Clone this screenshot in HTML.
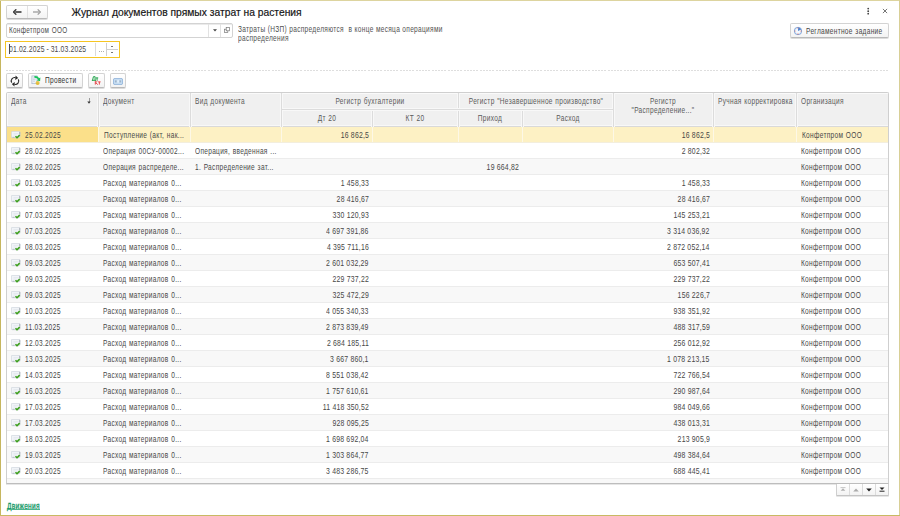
<!DOCTYPE html>
<html><head><meta charset="utf-8"><style>
*{box-sizing:border-box;margin:0;padding:0}
html,body{width:900px;height:516px;overflow:hidden;background:#fff}
body{position:relative;font-family:"Liberation Sans",sans-serif;color:#404040;font-size:8.5px}
.s{display:inline-block;transform:scaleX(.77);transform-origin:0 50%;letter-spacing:.4px;word-spacing:.6px}
.r .s{transform-origin:100% 50%;transform:scaleX(.81);letter-spacing:.25px;word-spacing:0}
.c .s{position:absolute;left:50%;top:0;transform:translateX(-50%) scaleX(.77);transform-origin:50% 50%;white-space:nowrap}
.a{position:absolute}
.bl{position:absolute;left:0;top:0;width:1px;height:516px;background:#c6b65f}
.bt{position:absolute;left:0;top:0;width:900px;height:1px;background:#ddd49f}
.br{position:absolute;left:899px;top:0;width:1px;height:516px;background:#d8cf96}
.bb{position:absolute;left:0;top:515px;width:900px;height:1px;background:#c8b963}
.btn{position:absolute;border:1px solid #d3d3d3;border-bottom-color:#b9b9b9;border-radius:2px;background:linear-gradient(#ffffff,#f3f3f3);box-shadow:0 1px 0 #dcdcdc}
.title{position:absolute;left:71.5px;top:5.5px;font-size:10.3px;line-height:14px;color:#151515;white-space:nowrap;-webkit-text-stroke:0.18px #151515}
.field{position:absolute;border:1px solid #d3d3d3;border-radius:2px;background:#fff;box-shadow:inset 0 1px 0 #ebebeb}
.txt{position:absolute;white-space:nowrap;line-height:9px}
.tbl{position:absolute;left:6px;top:92px;width:883px;height:392px;border:1px solid #cfcfcf;border-bottom:1px solid #bdbdbd;box-shadow:0 1px 0 #e6e6e6;border-radius:2px 2px 0 0}
.hdr{position:absolute;left:7px;top:93px;width:881px;height:34px;background:#f0f0f0;border-bottom:1px solid #d9d9d9;box-shadow:inset 1px 1px 0 #fafafa,inset 0 -1px 0 #f8f8f8;border-radius:1px 1px 0 0}
.vl{position:absolute;width:1px;background:#dcdcdc;box-shadow:1px 0 0 #f8f8f8,-1px 0 0 #f8f8f8}
.hl{position:absolute;height:1px;background:#dcdcdc;box-shadow:0 1px 0 #f8f8f8,0 -1px 0 #f8f8f8}
.ht{position:absolute;white-space:nowrap;line-height:10px;color:#5a5a5a}
.row{position:absolute;left:7px;width:881px;height:16px;background:#fff;border-bottom:1px solid #ececec}
.row.alt{background:#f8f8f8}
.row.sel{background:#fdf1c4;border-bottom-color:#f3eedd}
.cell{position:absolute;top:0;height:15px;line-height:16px;white-space:nowrap;overflow:hidden;color:#474747}
.row .cell{}
.cell.l{padding-left:5px}
.cell.r{text-align:right;padding-right:3px}
.row.sel .cell{border-left:1px solid #fdf8e6}
.row.sel .cell.cur{border-left:none}
.row.sel .cur{background:#fbe08a}
.cur .ic{position:absolute;left:4px;top:4px}
.cur .dt{position:absolute;left:18px;top:0}
.row .cell:first-child{left:0 !important}
</style></head><body>
<div class="bl"></div><div class="bt"></div><div class="br"></div><div class="bb"></div>

<!-- nav buttons -->
<div class="btn" style="left:6px;top:5px;width:42px;height:14px"></div>
<div class="a" style="left:27px;top:6px;width:1px;height:12px;background:#e1e1e1"></div>
<svg class="a" style="left:13px;top:9px" width="9" height="6" viewBox="0 0 9 6"><path d="M8.5 3H2.2" stroke="#3a3a3a" stroke-width="1.6"/><path d="M3.3 0.3 L0.5 3 L3.3 5.7" fill="none" stroke="#3a3a3a" stroke-width="1.4"/></svg>
<svg class="a" style="left:33px;top:9px" width="8" height="6" viewBox="0 0 8 6"><path d="M0 3H6.3" stroke="#9c9c9c" stroke-width="1.3"/><path d="M4.7 0.4 L7.4 3 L4.7 5.6" fill="none" stroke="#9c9c9c" stroke-width="1.2"/></svg>

<div class="title">Журнал документов прямых затрат на растения</div>

<!-- menu & close -->
<svg class="a" style="left:866px;top:6px" width="4" height="10" viewBox="0 0 4 10"><circle cx="2.2" cy="2.6" r="0.9" fill="#444"/><circle cx="2.2" cy="5.2" r="0.9" fill="#444"/><circle cx="2.2" cy="7.7" r="0.9" fill="#444"/></svg>
<svg class="a" style="left:882px;top:8px" width="6" height="6" viewBox="0 0 6 6"><path d="M0.9 0.9L5.1 5.1M5.1 0.9L0.9 5.1" stroke="#666" stroke-width="0.9"/></svg>

<!-- org field -->
<div class="field" style="left:6px;top:23px;width:227px;height:15px"></div>
<div class="a" style="left:208px;top:24px;width:1px;height:13px;background:#e2e2e2"></div>
<div class="a" style="left:220px;top:24px;width:1px;height:13px;background:#e2e2e2"></div>
<svg class="a" style="left:212.5px;top:28.5px" width="4" height="3" viewBox="0 0 4 3"><path d="M0 0.2H4L2 2.6Z" fill="#444"/></svg>
<svg class="a" style="left:223.5px;top:26.5px" width="6" height="6" viewBox="0 0 6 6"><rect x="0.5" y="2.2" width="3.3" height="3.3" fill="none" stroke="#777" stroke-width="0.7"/><rect x="2.2" y="0.5" width="3.3" height="3.3" fill="#fff" stroke="#777" stroke-width="0.7"/></svg>
<div class="txt" style="left:8.6px;top:26px;color:#4a4a4a"><span class="s" style="transform:scaleX(.75)">Конфетпром ООО</span></div>

<div class="txt" style="left:238px;top:24.5px;color:#505050"><span class="s" style="word-spacing:0.2px">Затраты (НЗП) распределяются&nbsp; в конце месяца операциями</span></div>
<div class="txt" style="left:238px;top:33.5px;color:#505050"><span class="s">распределения</span></div>

<!-- reglament button -->
<div class="btn" style="left:790px;top:23px;width:99px;height:15px"></div>
<svg class="a" style="left:793px;top:26px" width="10" height="10" viewBox="0 0 10 10"><circle cx="5" cy="5" r="3.7" fill="#f2f7fd" stroke="#6f9ad6" stroke-width="0.9"/><path d="M5 5V1.5A3.5 3.5 0 0 1 8.2 3.6Z" fill="#4f86d2"/><circle cx="5" cy="2.1" r="0.6" fill="#f07a6a"/><circle cx="7.9" cy="5" r="0.6" fill="#f07a6a"/><circle cx="5" cy="7.9" r="0.6" fill="#f07a6a"/><circle cx="2.1" cy="5" r="0.6" fill="#f07a6a"/></svg>
<div class="txt" style="left:806px;top:26.5px;color:#454545"><span class="s">Регламентное задание</span></div>

<!-- date field -->
<div class="a" style="left:5px;top:41px;width:115px;height:17px;border:1px solid #f5c523;background:#fff"></div>
<div class="a" style="left:9px;top:43.5px;width:1px;height:10px;background:#4a4a5a"></div>
<div class="txt" style="left:9px;top:45px;color:#4a4a4a"><span class="s" style="transform:scaleX(.8);letter-spacing:.2px;word-spacing:-0.3px">01.02.2025 - 31.03.2025</span></div>
<div class="a" style="left:94.5px;top:43px;width:1.5px;height:13px;background:#dadada"></div>
<div class="a" style="left:98.5px;top:51px;width:1px;height:1px;background:#b0b0b0"></div>
<div class="a" style="left:100.5px;top:51px;width:1px;height:1px;background:#b0b0b0"></div>
<div class="a" style="left:102.5px;top:51px;width:1px;height:1px;background:#b0b0b0"></div>
<div class="a" style="left:106px;top:43px;width:1px;height:13px;background:#cfcfcf"></div>
<div class="a" style="left:107px;top:49px;width:11px;height:1px;background:#cfcfcf"></div>
<div class="a" style="left:111px;top:46px;width:2px;height:1px;background:#777"></div>
<div class="a" style="left:111px;top:52px;width:2px;height:1px;background:#777"></div>

<!-- dotted separator -->
<div class="a" style="left:6px;top:70px;width:882px;height:1px;background:repeating-linear-gradient(90deg,#dedede 0,#dedede 2px,transparent 2px,transparent 3.2px)"></div>

<!-- toolbar -->
<div class="btn" style="left:6px;top:73px;width:17px;height:15px"></div>
<svg class="a" style="left:9px;top:74.5px" width="12" height="12" viewBox="0 0 12 12"><path d="M2.7 7.6A3.4 3.4 0 0 1 6.5 2.6" fill="none" stroke="#2a2a2a" stroke-width="1.1"/><path d="M9.3 4.4A3.4 3.4 0 0 1 5.5 9.4" fill="none" stroke="#2a2a2a" stroke-width="1.1"/><path d="M9.2 2.9L6.6 0.6L6.2 4.9Z" fill="#2a2a2a"/><path d="M2.8 9.1L5.4 11.4L5.8 7.1Z" fill="#2a2a2a"/></svg>
<div class="btn" style="left:28px;top:73px;width:55px;height:15px"></div>
<svg class="a" style="left:31px;top:75px" width="11" height="11" viewBox="0 0 11 11"><rect x="0.9" y="0.9" width="5.2" height="7.8" fill="#eef2f7" stroke="#a3b3c6" stroke-width="0.7"/><path d="M2 3h3M2 4.6h2.5M2 6.2h2" stroke="#b5c3d3" stroke-width="0.6"/><path d="M3.4 0.9Q7.2 0.7 7.9 3.3L9.4 2.4L9.1 6.3L5.6 5.3L7 4.5Q6.4 2.6 3.4 2.7Z" fill="#16c25a"/><circle cx="6.6" cy="7.9" r="2" fill="#e2bb3a"/><path d="M5.4 7.3Q6.6 6.3 7.8 7.3" stroke="#f3dc82" stroke-width="0.6" fill="none"/></svg>
<div class="txt" style="left:45px;top:76px;color:#333"><span class="s">Провести</span></div>
<div class="btn" style="left:88px;top:73px;width:17px;height:15px"></div>
<svg class="a" style="left:90px;top:75px" width="12" height="11" viewBox="0 0 12 11"><path d="M2.6 5.2L3.4 1.7H5.1V5.2M2 5.3H5.8M2.3 5.3V6M5.5 5.3V6" fill="none" stroke="#22a34c" stroke-width="1"/><path d="M5.9 2.9H8.2M7.05 2.9V5.6" fill="none" stroke="#22a34c" stroke-width="1"/><path d="M5.3 5.9V9.6M7.6 5.9L5.7 7.7L7.8 9.6" fill="none" stroke="#e5484a" stroke-width="1"/><path d="M8.1 6.9H10.6M9.35 6.9V9.6" fill="none" stroke="#e5484a" stroke-width="1"/></svg>
<div class="btn" style="left:110px;top:73px;width:16px;height:15px"></div>
<svg class="a" style="left:113px;top:77.5px" width="10" height="7" viewBox="0 0 10 7"><rect x="0.4" y="0.4" width="9.2" height="6.2" rx="1.5" fill="#c5dcf2" stroke="#86acd6" stroke-width="0.8"/><rect x="2" y="2.4" width="1.6" height="2" fill="#9fb4c8"/><rect x="4.3" y="2.2" width="1.6" height="2.4" fill="#e6f2fc"/><rect x="6.5" y="2.4" width="1.6" height="2" fill="#9fb4c8"/></svg>

<!-- table -->
<div class="tbl"></div>
<div class="hdr"></div>
<div class="vl" style="left:98px;top:93px;height:34px"></div>
<div class="vl" style="left:190px;top:93px;height:34px"></div>
<div class="vl" style="left:281px;top:93px;height:34px"></div>
<div class="vl" style="left:458px;top:93px;height:34px"></div>
<div class="vl" style="left:613px;top:93px;height:34px"></div>
<div class="vl" style="left:713px;top:93px;height:34px"></div>
<div class="vl" style="left:796px;top:93px;height:34px"></div>
<div class="vl" style="left:372px;top:110px;height:17px"></div>
<div class="vl" style="left:522px;top:110px;height:17px"></div>
<div class="hl" style="left:282px;top:109px;width:331px"></div>
<div class="ht" style="left:11px;top:96.4px"><span class="s">Дата</span></div>
<div class="a" style="left:88.5px;top:98px;width:1px;height:4px;background:#9a9a9a"></div><svg class="a" style="left:87px;top:101px" width="4" height="3" viewBox="0 0 4 3"><path d="M0.3 0.4H3.7L2 2.8Z" fill="#333"/></svg>
<div class="ht" style="left:103px;top:96.4px"><span class="s">Документ</span></div>
<div class="ht" style="left:195px;top:96.4px"><span class="s">Вид документа</span></div>
<div class="ht c" style="left:281px;top:96.4px;width:177px;text-align:center"><span class="s">Регистр бухгалтерии</span></div>
<div class="ht c" style="left:458px;top:96.4px;width:155px;text-align:center"><span class="s">Регистр "Незавершенное производство"</span></div>
<div class="ht c" style="left:281px;top:113.4px;width:91px;text-align:center"><span class="s">Дт 20</span></div>
<div class="ht c" style="left:372px;top:113.4px;width:86px;text-align:center"><span class="s">КТ 20</span></div>
<div class="ht c" style="left:458px;top:113.4px;width:64px;text-align:center"><span class="s">Приход</span></div>
<div class="ht c" style="left:522px;top:113.4px;width:91px;text-align:center"><span class="s">Расход</span></div>
<div class="ht c" style="left:613px;top:96.4px;width:100px;text-align:center"><span class="s">Регистр</span></div>
<div class="ht c" style="left:613px;top:105.4px;width:100px;text-align:center"><span class="s">"Распределение..."</span></div>
<div class="ht" style="left:718px;top:96.4px"><span class="s">Ручная корректировка</span></div>
<div class="ht" style="left:801px;top:96.4px"><span class="s">Организация</span></div>
<div class="row sel" style="top:127px">
<div class="cell cur" style="left:0px;width:91px"><svg class="ic" width="10" height="9" viewBox="0 0 10 9"><rect x="0.3" y="0.3" width="8.8" height="6.4" rx="1.2" fill="#f1f4f8" stroke="#c3cad3" stroke-width="0.6"/><path d="M1.5 6.3h2" stroke="#aab2bc" stroke-width="0.8"/><path d="M8.7 1v2.5" stroke="#9aa2ab" stroke-width="0.8"/><path d="M2.5 2.5h5M2.5 4h3" stroke="#dde3ea" stroke-width="0.6"/><path d="M4.5 5.3 L6 6.8 L8.7 4.1" fill="none" stroke="#3c9e1c" stroke-width="1.6" stroke-linejoin="round"/></svg><span class="dt"><span class="s">25.02.2025</span></span></div>
<div class="cell l" style="left:91px;width:92px"><span class="s">Поступление (акт, нак...</span></div>
<div class="cell l" style="left:183px;width:91px"><span class="s"></span></div>
<div class="cell r" style="left:274px;width:91px"><span class="s">16 862,5</span></div>
<div class="cell r" style="left:365px;width:86px"><span class="s"></span></div>
<div class="cell r" style="left:451px;width:64px"><span class="s"></span></div>
<div class="cell r" style="left:515px;width:91px"><span class="s"></span></div>
<div class="cell r" style="left:606px;width:100px"><span class="s">16 862,5</span></div>
<div class="cell l" style="left:706px;width:83px"><span class="s"></span></div>
<div class="cell l" style="left:789px;width:92px"><span class="s">Конфетпром ООО</span></div>
</div>
<div class="row" style="top:143px">
<div class="cell cur" style="left:0px;width:91px"><svg class="ic" width="10" height="9" viewBox="0 0 10 9"><rect x="0.3" y="0.3" width="8.8" height="6.4" rx="1.2" fill="#f1f4f8" stroke="#c3cad3" stroke-width="0.6"/><path d="M1.5 6.3h2" stroke="#aab2bc" stroke-width="0.8"/><path d="M8.7 1v2.5" stroke="#9aa2ab" stroke-width="0.8"/><path d="M2.5 2.5h5M2.5 4h3" stroke="#dde3ea" stroke-width="0.6"/><path d="M4.5 5.3 L6 6.8 L8.7 4.1" fill="none" stroke="#3c9e1c" stroke-width="1.6" stroke-linejoin="round"/></svg><span class="dt"><span class="s">28.02.2025</span></span></div>
<div class="cell l" style="left:91px;width:92px"><span class="s">Операция 00СУ-00002...</span></div>
<div class="cell l" style="left:183px;width:91px"><span class="s">Операция, введенная ...</span></div>
<div class="cell r" style="left:274px;width:91px"><span class="s"></span></div>
<div class="cell r" style="left:365px;width:86px"><span class="s"></span></div>
<div class="cell r" style="left:451px;width:64px"><span class="s"></span></div>
<div class="cell r" style="left:515px;width:91px"><span class="s"></span></div>
<div class="cell r" style="left:606px;width:100px"><span class="s">2 802,32</span></div>
<div class="cell l" style="left:706px;width:83px"><span class="s"></span></div>
<div class="cell l" style="left:789px;width:92px"><span class="s">Конфетпром ООО</span></div>
</div>
<div class="row alt" style="top:159px">
<div class="cell cur" style="left:0px;width:91px"><svg class="ic" width="10" height="9" viewBox="0 0 10 9"><rect x="0.3" y="0.3" width="8.8" height="6.4" rx="1.2" fill="#f1f4f8" stroke="#c3cad3" stroke-width="0.6"/><path d="M1.5 6.3h2" stroke="#aab2bc" stroke-width="0.8"/><path d="M8.7 1v2.5" stroke="#9aa2ab" stroke-width="0.8"/><path d="M2.5 2.5h5M2.5 4h3" stroke="#dde3ea" stroke-width="0.6"/><path d="M4.5 5.3 L6 6.8 L8.7 4.1" fill="none" stroke="#3c9e1c" stroke-width="1.6" stroke-linejoin="round"/></svg><span class="dt"><span class="s">28.02.2025</span></span></div>
<div class="cell l" style="left:91px;width:92px"><span class="s">Операция распределе...</span></div>
<div class="cell l" style="left:183px;width:91px"><span class="s">1. Распределение зат...</span></div>
<div class="cell r" style="left:274px;width:91px"><span class="s"></span></div>
<div class="cell r" style="left:365px;width:86px"><span class="s"></span></div>
<div class="cell r" style="left:451px;width:64px"><span class="s">19 664,82</span></div>
<div class="cell r" style="left:515px;width:91px"><span class="s"></span></div>
<div class="cell r" style="left:606px;width:100px"><span class="s"></span></div>
<div class="cell l" style="left:706px;width:83px"><span class="s"></span></div>
<div class="cell l" style="left:789px;width:92px"><span class="s">Конфетпром ООО</span></div>
</div>
<div class="row" style="top:175px">
<div class="cell cur" style="left:0px;width:91px"><svg class="ic" width="10" height="9" viewBox="0 0 10 9"><rect x="0.3" y="0.3" width="8.8" height="6.4" rx="1.2" fill="#f1f4f8" stroke="#c3cad3" stroke-width="0.6"/><path d="M1.5 6.3h2" stroke="#aab2bc" stroke-width="0.8"/><path d="M8.7 1v2.5" stroke="#9aa2ab" stroke-width="0.8"/><path d="M2.5 2.5h5M2.5 4h3" stroke="#dde3ea" stroke-width="0.6"/><path d="M4.5 5.3 L6 6.8 L8.7 4.1" fill="none" stroke="#3c9e1c" stroke-width="1.6" stroke-linejoin="round"/></svg><span class="dt"><span class="s">01.03.2025</span></span></div>
<div class="cell l" style="left:91px;width:92px"><span class="s">Расход материалов 0...</span></div>
<div class="cell l" style="left:183px;width:91px"><span class="s"></span></div>
<div class="cell r" style="left:274px;width:91px"><span class="s">1 458,33</span></div>
<div class="cell r" style="left:365px;width:86px"><span class="s"></span></div>
<div class="cell r" style="left:451px;width:64px"><span class="s"></span></div>
<div class="cell r" style="left:515px;width:91px"><span class="s"></span></div>
<div class="cell r" style="left:606px;width:100px"><span class="s">1 458,33</span></div>
<div class="cell l" style="left:706px;width:83px"><span class="s"></span></div>
<div class="cell l" style="left:789px;width:92px"><span class="s">Конфетпром ООО</span></div>
</div>
<div class="row alt" style="top:191px">
<div class="cell cur" style="left:0px;width:91px"><svg class="ic" width="10" height="9" viewBox="0 0 10 9"><rect x="0.3" y="0.3" width="8.8" height="6.4" rx="1.2" fill="#f1f4f8" stroke="#c3cad3" stroke-width="0.6"/><path d="M1.5 6.3h2" stroke="#aab2bc" stroke-width="0.8"/><path d="M8.7 1v2.5" stroke="#9aa2ab" stroke-width="0.8"/><path d="M2.5 2.5h5M2.5 4h3" stroke="#dde3ea" stroke-width="0.6"/><path d="M4.5 5.3 L6 6.8 L8.7 4.1" fill="none" stroke="#3c9e1c" stroke-width="1.6" stroke-linejoin="round"/></svg><span class="dt"><span class="s">01.03.2025</span></span></div>
<div class="cell l" style="left:91px;width:92px"><span class="s">Расход материалов 0...</span></div>
<div class="cell l" style="left:183px;width:91px"><span class="s"></span></div>
<div class="cell r" style="left:274px;width:91px"><span class="s">28 416,67</span></div>
<div class="cell r" style="left:365px;width:86px"><span class="s"></span></div>
<div class="cell r" style="left:451px;width:64px"><span class="s"></span></div>
<div class="cell r" style="left:515px;width:91px"><span class="s"></span></div>
<div class="cell r" style="left:606px;width:100px"><span class="s">28 416,67</span></div>
<div class="cell l" style="left:706px;width:83px"><span class="s"></span></div>
<div class="cell l" style="left:789px;width:92px"><span class="s">Конфетпром ООО</span></div>
</div>
<div class="row" style="top:207px">
<div class="cell cur" style="left:0px;width:91px"><svg class="ic" width="10" height="9" viewBox="0 0 10 9"><rect x="0.3" y="0.3" width="8.8" height="6.4" rx="1.2" fill="#f1f4f8" stroke="#c3cad3" stroke-width="0.6"/><path d="M1.5 6.3h2" stroke="#aab2bc" stroke-width="0.8"/><path d="M8.7 1v2.5" stroke="#9aa2ab" stroke-width="0.8"/><path d="M2.5 2.5h5M2.5 4h3" stroke="#dde3ea" stroke-width="0.6"/><path d="M4.5 5.3 L6 6.8 L8.7 4.1" fill="none" stroke="#3c9e1c" stroke-width="1.6" stroke-linejoin="round"/></svg><span class="dt"><span class="s">07.03.2025</span></span></div>
<div class="cell l" style="left:91px;width:92px"><span class="s">Расход материалов 0...</span></div>
<div class="cell l" style="left:183px;width:91px"><span class="s"></span></div>
<div class="cell r" style="left:274px;width:91px"><span class="s">330 120,93</span></div>
<div class="cell r" style="left:365px;width:86px"><span class="s"></span></div>
<div class="cell r" style="left:451px;width:64px"><span class="s"></span></div>
<div class="cell r" style="left:515px;width:91px"><span class="s"></span></div>
<div class="cell r" style="left:606px;width:100px"><span class="s">145 253,21</span></div>
<div class="cell l" style="left:706px;width:83px"><span class="s"></span></div>
<div class="cell l" style="left:789px;width:92px"><span class="s">Конфетпром ООО</span></div>
</div>
<div class="row alt" style="top:223px">
<div class="cell cur" style="left:0px;width:91px"><svg class="ic" width="10" height="9" viewBox="0 0 10 9"><rect x="0.3" y="0.3" width="8.8" height="6.4" rx="1.2" fill="#f1f4f8" stroke="#c3cad3" stroke-width="0.6"/><path d="M1.5 6.3h2" stroke="#aab2bc" stroke-width="0.8"/><path d="M8.7 1v2.5" stroke="#9aa2ab" stroke-width="0.8"/><path d="M2.5 2.5h5M2.5 4h3" stroke="#dde3ea" stroke-width="0.6"/><path d="M4.5 5.3 L6 6.8 L8.7 4.1" fill="none" stroke="#3c9e1c" stroke-width="1.6" stroke-linejoin="round"/></svg><span class="dt"><span class="s">07.03.2025</span></span></div>
<div class="cell l" style="left:91px;width:92px"><span class="s">Расход материалов 0...</span></div>
<div class="cell l" style="left:183px;width:91px"><span class="s"></span></div>
<div class="cell r" style="left:274px;width:91px"><span class="s">4 697 391,86</span></div>
<div class="cell r" style="left:365px;width:86px"><span class="s"></span></div>
<div class="cell r" style="left:451px;width:64px"><span class="s"></span></div>
<div class="cell r" style="left:515px;width:91px"><span class="s"></span></div>
<div class="cell r" style="left:606px;width:100px"><span class="s">3 314 036,92</span></div>
<div class="cell l" style="left:706px;width:83px"><span class="s"></span></div>
<div class="cell l" style="left:789px;width:92px"><span class="s">Конфетпром ООО</span></div>
</div>
<div class="row" style="top:239px">
<div class="cell cur" style="left:0px;width:91px"><svg class="ic" width="10" height="9" viewBox="0 0 10 9"><rect x="0.3" y="0.3" width="8.8" height="6.4" rx="1.2" fill="#f1f4f8" stroke="#c3cad3" stroke-width="0.6"/><path d="M1.5 6.3h2" stroke="#aab2bc" stroke-width="0.8"/><path d="M8.7 1v2.5" stroke="#9aa2ab" stroke-width="0.8"/><path d="M2.5 2.5h5M2.5 4h3" stroke="#dde3ea" stroke-width="0.6"/><path d="M4.5 5.3 L6 6.8 L8.7 4.1" fill="none" stroke="#3c9e1c" stroke-width="1.6" stroke-linejoin="round"/></svg><span class="dt"><span class="s">08.03.2025</span></span></div>
<div class="cell l" style="left:91px;width:92px"><span class="s">Расход материалов 0...</span></div>
<div class="cell l" style="left:183px;width:91px"><span class="s"></span></div>
<div class="cell r" style="left:274px;width:91px"><span class="s">4 395 711,16</span></div>
<div class="cell r" style="left:365px;width:86px"><span class="s"></span></div>
<div class="cell r" style="left:451px;width:64px"><span class="s"></span></div>
<div class="cell r" style="left:515px;width:91px"><span class="s"></span></div>
<div class="cell r" style="left:606px;width:100px"><span class="s">2 872 052,14</span></div>
<div class="cell l" style="left:706px;width:83px"><span class="s"></span></div>
<div class="cell l" style="left:789px;width:92px"><span class="s">Конфетпром ООО</span></div>
</div>
<div class="row alt" style="top:255px">
<div class="cell cur" style="left:0px;width:91px"><svg class="ic" width="10" height="9" viewBox="0 0 10 9"><rect x="0.3" y="0.3" width="8.8" height="6.4" rx="1.2" fill="#f1f4f8" stroke="#c3cad3" stroke-width="0.6"/><path d="M1.5 6.3h2" stroke="#aab2bc" stroke-width="0.8"/><path d="M8.7 1v2.5" stroke="#9aa2ab" stroke-width="0.8"/><path d="M2.5 2.5h5M2.5 4h3" stroke="#dde3ea" stroke-width="0.6"/><path d="M4.5 5.3 L6 6.8 L8.7 4.1" fill="none" stroke="#3c9e1c" stroke-width="1.6" stroke-linejoin="round"/></svg><span class="dt"><span class="s">09.03.2025</span></span></div>
<div class="cell l" style="left:91px;width:92px"><span class="s">Расход материалов 0...</span></div>
<div class="cell l" style="left:183px;width:91px"><span class="s"></span></div>
<div class="cell r" style="left:274px;width:91px"><span class="s">2 601 032,29</span></div>
<div class="cell r" style="left:365px;width:86px"><span class="s"></span></div>
<div class="cell r" style="left:451px;width:64px"><span class="s"></span></div>
<div class="cell r" style="left:515px;width:91px"><span class="s"></span></div>
<div class="cell r" style="left:606px;width:100px"><span class="s">653 507,41</span></div>
<div class="cell l" style="left:706px;width:83px"><span class="s"></span></div>
<div class="cell l" style="left:789px;width:92px"><span class="s">Конфетпром ООО</span></div>
</div>
<div class="row" style="top:271px">
<div class="cell cur" style="left:0px;width:91px"><svg class="ic" width="10" height="9" viewBox="0 0 10 9"><rect x="0.3" y="0.3" width="8.8" height="6.4" rx="1.2" fill="#f1f4f8" stroke="#c3cad3" stroke-width="0.6"/><path d="M1.5 6.3h2" stroke="#aab2bc" stroke-width="0.8"/><path d="M8.7 1v2.5" stroke="#9aa2ab" stroke-width="0.8"/><path d="M2.5 2.5h5M2.5 4h3" stroke="#dde3ea" stroke-width="0.6"/><path d="M4.5 5.3 L6 6.8 L8.7 4.1" fill="none" stroke="#3c9e1c" stroke-width="1.6" stroke-linejoin="round"/></svg><span class="dt"><span class="s">09.03.2025</span></span></div>
<div class="cell l" style="left:91px;width:92px"><span class="s">Расход материалов 0...</span></div>
<div class="cell l" style="left:183px;width:91px"><span class="s"></span></div>
<div class="cell r" style="left:274px;width:91px"><span class="s">229 737,22</span></div>
<div class="cell r" style="left:365px;width:86px"><span class="s"></span></div>
<div class="cell r" style="left:451px;width:64px"><span class="s"></span></div>
<div class="cell r" style="left:515px;width:91px"><span class="s"></span></div>
<div class="cell r" style="left:606px;width:100px"><span class="s">229 737,22</span></div>
<div class="cell l" style="left:706px;width:83px"><span class="s"></span></div>
<div class="cell l" style="left:789px;width:92px"><span class="s">Конфетпром ООО</span></div>
</div>
<div class="row alt" style="top:287px">
<div class="cell cur" style="left:0px;width:91px"><svg class="ic" width="10" height="9" viewBox="0 0 10 9"><rect x="0.3" y="0.3" width="8.8" height="6.4" rx="1.2" fill="#f1f4f8" stroke="#c3cad3" stroke-width="0.6"/><path d="M1.5 6.3h2" stroke="#aab2bc" stroke-width="0.8"/><path d="M8.7 1v2.5" stroke="#9aa2ab" stroke-width="0.8"/><path d="M2.5 2.5h5M2.5 4h3" stroke="#dde3ea" stroke-width="0.6"/><path d="M4.5 5.3 L6 6.8 L8.7 4.1" fill="none" stroke="#3c9e1c" stroke-width="1.6" stroke-linejoin="round"/></svg><span class="dt"><span class="s">09.03.2025</span></span></div>
<div class="cell l" style="left:91px;width:92px"><span class="s">Расход материалов 0...</span></div>
<div class="cell l" style="left:183px;width:91px"><span class="s"></span></div>
<div class="cell r" style="left:274px;width:91px"><span class="s">325 472,29</span></div>
<div class="cell r" style="left:365px;width:86px"><span class="s"></span></div>
<div class="cell r" style="left:451px;width:64px"><span class="s"></span></div>
<div class="cell r" style="left:515px;width:91px"><span class="s"></span></div>
<div class="cell r" style="left:606px;width:100px"><span class="s">156 226,7</span></div>
<div class="cell l" style="left:706px;width:83px"><span class="s"></span></div>
<div class="cell l" style="left:789px;width:92px"><span class="s">Конфетпром ООО</span></div>
</div>
<div class="row" style="top:303px">
<div class="cell cur" style="left:0px;width:91px"><svg class="ic" width="10" height="9" viewBox="0 0 10 9"><rect x="0.3" y="0.3" width="8.8" height="6.4" rx="1.2" fill="#f1f4f8" stroke="#c3cad3" stroke-width="0.6"/><path d="M1.5 6.3h2" stroke="#aab2bc" stroke-width="0.8"/><path d="M8.7 1v2.5" stroke="#9aa2ab" stroke-width="0.8"/><path d="M2.5 2.5h5M2.5 4h3" stroke="#dde3ea" stroke-width="0.6"/><path d="M4.5 5.3 L6 6.8 L8.7 4.1" fill="none" stroke="#3c9e1c" stroke-width="1.6" stroke-linejoin="round"/></svg><span class="dt"><span class="s">10.03.2025</span></span></div>
<div class="cell l" style="left:91px;width:92px"><span class="s">Расход материалов 0...</span></div>
<div class="cell l" style="left:183px;width:91px"><span class="s"></span></div>
<div class="cell r" style="left:274px;width:91px"><span class="s">4 055 340,33</span></div>
<div class="cell r" style="left:365px;width:86px"><span class="s"></span></div>
<div class="cell r" style="left:451px;width:64px"><span class="s"></span></div>
<div class="cell r" style="left:515px;width:91px"><span class="s"></span></div>
<div class="cell r" style="left:606px;width:100px"><span class="s">938 351,92</span></div>
<div class="cell l" style="left:706px;width:83px"><span class="s"></span></div>
<div class="cell l" style="left:789px;width:92px"><span class="s">Конфетпром ООО</span></div>
</div>
<div class="row alt" style="top:319px">
<div class="cell cur" style="left:0px;width:91px"><svg class="ic" width="10" height="9" viewBox="0 0 10 9"><rect x="0.3" y="0.3" width="8.8" height="6.4" rx="1.2" fill="#f1f4f8" stroke="#c3cad3" stroke-width="0.6"/><path d="M1.5 6.3h2" stroke="#aab2bc" stroke-width="0.8"/><path d="M8.7 1v2.5" stroke="#9aa2ab" stroke-width="0.8"/><path d="M2.5 2.5h5M2.5 4h3" stroke="#dde3ea" stroke-width="0.6"/><path d="M4.5 5.3 L6 6.8 L8.7 4.1" fill="none" stroke="#3c9e1c" stroke-width="1.6" stroke-linejoin="round"/></svg><span class="dt"><span class="s">11.03.2025</span></span></div>
<div class="cell l" style="left:91px;width:92px"><span class="s">Расход материалов 0...</span></div>
<div class="cell l" style="left:183px;width:91px"><span class="s"></span></div>
<div class="cell r" style="left:274px;width:91px"><span class="s">2 873 839,49</span></div>
<div class="cell r" style="left:365px;width:86px"><span class="s"></span></div>
<div class="cell r" style="left:451px;width:64px"><span class="s"></span></div>
<div class="cell r" style="left:515px;width:91px"><span class="s"></span></div>
<div class="cell r" style="left:606px;width:100px"><span class="s">488 317,59</span></div>
<div class="cell l" style="left:706px;width:83px"><span class="s"></span></div>
<div class="cell l" style="left:789px;width:92px"><span class="s">Конфетпром ООО</span></div>
</div>
<div class="row" style="top:335px">
<div class="cell cur" style="left:0px;width:91px"><svg class="ic" width="10" height="9" viewBox="0 0 10 9"><rect x="0.3" y="0.3" width="8.8" height="6.4" rx="1.2" fill="#f1f4f8" stroke="#c3cad3" stroke-width="0.6"/><path d="M1.5 6.3h2" stroke="#aab2bc" stroke-width="0.8"/><path d="M8.7 1v2.5" stroke="#9aa2ab" stroke-width="0.8"/><path d="M2.5 2.5h5M2.5 4h3" stroke="#dde3ea" stroke-width="0.6"/><path d="M4.5 5.3 L6 6.8 L8.7 4.1" fill="none" stroke="#3c9e1c" stroke-width="1.6" stroke-linejoin="round"/></svg><span class="dt"><span class="s">12.03.2025</span></span></div>
<div class="cell l" style="left:91px;width:92px"><span class="s">Расход материалов 0...</span></div>
<div class="cell l" style="left:183px;width:91px"><span class="s"></span></div>
<div class="cell r" style="left:274px;width:91px"><span class="s">2 684 185,11</span></div>
<div class="cell r" style="left:365px;width:86px"><span class="s"></span></div>
<div class="cell r" style="left:451px;width:64px"><span class="s"></span></div>
<div class="cell r" style="left:515px;width:91px"><span class="s"></span></div>
<div class="cell r" style="left:606px;width:100px"><span class="s">256 012,92</span></div>
<div class="cell l" style="left:706px;width:83px"><span class="s"></span></div>
<div class="cell l" style="left:789px;width:92px"><span class="s">Конфетпром ООО</span></div>
</div>
<div class="row alt" style="top:351px">
<div class="cell cur" style="left:0px;width:91px"><svg class="ic" width="10" height="9" viewBox="0 0 10 9"><rect x="0.3" y="0.3" width="8.8" height="6.4" rx="1.2" fill="#f1f4f8" stroke="#c3cad3" stroke-width="0.6"/><path d="M1.5 6.3h2" stroke="#aab2bc" stroke-width="0.8"/><path d="M8.7 1v2.5" stroke="#9aa2ab" stroke-width="0.8"/><path d="M2.5 2.5h5M2.5 4h3" stroke="#dde3ea" stroke-width="0.6"/><path d="M4.5 5.3 L6 6.8 L8.7 4.1" fill="none" stroke="#3c9e1c" stroke-width="1.6" stroke-linejoin="round"/></svg><span class="dt"><span class="s">13.03.2025</span></span></div>
<div class="cell l" style="left:91px;width:92px"><span class="s">Расход материалов 0...</span></div>
<div class="cell l" style="left:183px;width:91px"><span class="s"></span></div>
<div class="cell r" style="left:274px;width:91px"><span class="s">3 667 860,1</span></div>
<div class="cell r" style="left:365px;width:86px"><span class="s"></span></div>
<div class="cell r" style="left:451px;width:64px"><span class="s"></span></div>
<div class="cell r" style="left:515px;width:91px"><span class="s"></span></div>
<div class="cell r" style="left:606px;width:100px"><span class="s">1 078 213,15</span></div>
<div class="cell l" style="left:706px;width:83px"><span class="s"></span></div>
<div class="cell l" style="left:789px;width:92px"><span class="s">Конфетпром ООО</span></div>
</div>
<div class="row" style="top:367px">
<div class="cell cur" style="left:0px;width:91px"><svg class="ic" width="10" height="9" viewBox="0 0 10 9"><rect x="0.3" y="0.3" width="8.8" height="6.4" rx="1.2" fill="#f1f4f8" stroke="#c3cad3" stroke-width="0.6"/><path d="M1.5 6.3h2" stroke="#aab2bc" stroke-width="0.8"/><path d="M8.7 1v2.5" stroke="#9aa2ab" stroke-width="0.8"/><path d="M2.5 2.5h5M2.5 4h3" stroke="#dde3ea" stroke-width="0.6"/><path d="M4.5 5.3 L6 6.8 L8.7 4.1" fill="none" stroke="#3c9e1c" stroke-width="1.6" stroke-linejoin="round"/></svg><span class="dt"><span class="s">14.03.2025</span></span></div>
<div class="cell l" style="left:91px;width:92px"><span class="s">Расход материалов 0...</span></div>
<div class="cell l" style="left:183px;width:91px"><span class="s"></span></div>
<div class="cell r" style="left:274px;width:91px"><span class="s">8 551 038,42</span></div>
<div class="cell r" style="left:365px;width:86px"><span class="s"></span></div>
<div class="cell r" style="left:451px;width:64px"><span class="s"></span></div>
<div class="cell r" style="left:515px;width:91px"><span class="s"></span></div>
<div class="cell r" style="left:606px;width:100px"><span class="s">722 766,54</span></div>
<div class="cell l" style="left:706px;width:83px"><span class="s"></span></div>
<div class="cell l" style="left:789px;width:92px"><span class="s">Конфетпром ООО</span></div>
</div>
<div class="row alt" style="top:383px">
<div class="cell cur" style="left:0px;width:91px"><svg class="ic" width="10" height="9" viewBox="0 0 10 9"><rect x="0.3" y="0.3" width="8.8" height="6.4" rx="1.2" fill="#f1f4f8" stroke="#c3cad3" stroke-width="0.6"/><path d="M1.5 6.3h2" stroke="#aab2bc" stroke-width="0.8"/><path d="M8.7 1v2.5" stroke="#9aa2ab" stroke-width="0.8"/><path d="M2.5 2.5h5M2.5 4h3" stroke="#dde3ea" stroke-width="0.6"/><path d="M4.5 5.3 L6 6.8 L8.7 4.1" fill="none" stroke="#3c9e1c" stroke-width="1.6" stroke-linejoin="round"/></svg><span class="dt"><span class="s">16.03.2025</span></span></div>
<div class="cell l" style="left:91px;width:92px"><span class="s">Расход материалов 0...</span></div>
<div class="cell l" style="left:183px;width:91px"><span class="s"></span></div>
<div class="cell r" style="left:274px;width:91px"><span class="s">1 757 610,61</span></div>
<div class="cell r" style="left:365px;width:86px"><span class="s"></span></div>
<div class="cell r" style="left:451px;width:64px"><span class="s"></span></div>
<div class="cell r" style="left:515px;width:91px"><span class="s"></span></div>
<div class="cell r" style="left:606px;width:100px"><span class="s">290 987,64</span></div>
<div class="cell l" style="left:706px;width:83px"><span class="s"></span></div>
<div class="cell l" style="left:789px;width:92px"><span class="s">Конфетпром ООО</span></div>
</div>
<div class="row" style="top:399px">
<div class="cell cur" style="left:0px;width:91px"><svg class="ic" width="10" height="9" viewBox="0 0 10 9"><rect x="0.3" y="0.3" width="8.8" height="6.4" rx="1.2" fill="#f1f4f8" stroke="#c3cad3" stroke-width="0.6"/><path d="M1.5 6.3h2" stroke="#aab2bc" stroke-width="0.8"/><path d="M8.7 1v2.5" stroke="#9aa2ab" stroke-width="0.8"/><path d="M2.5 2.5h5M2.5 4h3" stroke="#dde3ea" stroke-width="0.6"/><path d="M4.5 5.3 L6 6.8 L8.7 4.1" fill="none" stroke="#3c9e1c" stroke-width="1.6" stroke-linejoin="round"/></svg><span class="dt"><span class="s">17.03.2025</span></span></div>
<div class="cell l" style="left:91px;width:92px"><span class="s">Расход материалов 0...</span></div>
<div class="cell l" style="left:183px;width:91px"><span class="s"></span></div>
<div class="cell r" style="left:274px;width:91px"><span class="s">11 418 350,52</span></div>
<div class="cell r" style="left:365px;width:86px"><span class="s"></span></div>
<div class="cell r" style="left:451px;width:64px"><span class="s"></span></div>
<div class="cell r" style="left:515px;width:91px"><span class="s"></span></div>
<div class="cell r" style="left:606px;width:100px"><span class="s">984 049,66</span></div>
<div class="cell l" style="left:706px;width:83px"><span class="s"></span></div>
<div class="cell l" style="left:789px;width:92px"><span class="s">Конфетпром ООО</span></div>
</div>
<div class="row alt" style="top:415px">
<div class="cell cur" style="left:0px;width:91px"><svg class="ic" width="10" height="9" viewBox="0 0 10 9"><rect x="0.3" y="0.3" width="8.8" height="6.4" rx="1.2" fill="#f1f4f8" stroke="#c3cad3" stroke-width="0.6"/><path d="M1.5 6.3h2" stroke="#aab2bc" stroke-width="0.8"/><path d="M8.7 1v2.5" stroke="#9aa2ab" stroke-width="0.8"/><path d="M2.5 2.5h5M2.5 4h3" stroke="#dde3ea" stroke-width="0.6"/><path d="M4.5 5.3 L6 6.8 L8.7 4.1" fill="none" stroke="#3c9e1c" stroke-width="1.6" stroke-linejoin="round"/></svg><span class="dt"><span class="s">17.03.2025</span></span></div>
<div class="cell l" style="left:91px;width:92px"><span class="s">Расход материалов 0...</span></div>
<div class="cell l" style="left:183px;width:91px"><span class="s"></span></div>
<div class="cell r" style="left:274px;width:91px"><span class="s">928 095,25</span></div>
<div class="cell r" style="left:365px;width:86px"><span class="s"></span></div>
<div class="cell r" style="left:451px;width:64px"><span class="s"></span></div>
<div class="cell r" style="left:515px;width:91px"><span class="s"></span></div>
<div class="cell r" style="left:606px;width:100px"><span class="s">438 013,31</span></div>
<div class="cell l" style="left:706px;width:83px"><span class="s"></span></div>
<div class="cell l" style="left:789px;width:92px"><span class="s">Конфетпром ООО</span></div>
</div>
<div class="row" style="top:431px">
<div class="cell cur" style="left:0px;width:91px"><svg class="ic" width="10" height="9" viewBox="0 0 10 9"><rect x="0.3" y="0.3" width="8.8" height="6.4" rx="1.2" fill="#f1f4f8" stroke="#c3cad3" stroke-width="0.6"/><path d="M1.5 6.3h2" stroke="#aab2bc" stroke-width="0.8"/><path d="M8.7 1v2.5" stroke="#9aa2ab" stroke-width="0.8"/><path d="M2.5 2.5h5M2.5 4h3" stroke="#dde3ea" stroke-width="0.6"/><path d="M4.5 5.3 L6 6.8 L8.7 4.1" fill="none" stroke="#3c9e1c" stroke-width="1.6" stroke-linejoin="round"/></svg><span class="dt"><span class="s">18.03.2025</span></span></div>
<div class="cell l" style="left:91px;width:92px"><span class="s">Расход материалов 0...</span></div>
<div class="cell l" style="left:183px;width:91px"><span class="s"></span></div>
<div class="cell r" style="left:274px;width:91px"><span class="s">1 698 692,04</span></div>
<div class="cell r" style="left:365px;width:86px"><span class="s"></span></div>
<div class="cell r" style="left:451px;width:64px"><span class="s"></span></div>
<div class="cell r" style="left:515px;width:91px"><span class="s"></span></div>
<div class="cell r" style="left:606px;width:100px"><span class="s">213 905,9</span></div>
<div class="cell l" style="left:706px;width:83px"><span class="s"></span></div>
<div class="cell l" style="left:789px;width:92px"><span class="s">Конфетпром ООО</span></div>
</div>
<div class="row alt" style="top:447px">
<div class="cell cur" style="left:0px;width:91px"><svg class="ic" width="10" height="9" viewBox="0 0 10 9"><rect x="0.3" y="0.3" width="8.8" height="6.4" rx="1.2" fill="#f1f4f8" stroke="#c3cad3" stroke-width="0.6"/><path d="M1.5 6.3h2" stroke="#aab2bc" stroke-width="0.8"/><path d="M8.7 1v2.5" stroke="#9aa2ab" stroke-width="0.8"/><path d="M2.5 2.5h5M2.5 4h3" stroke="#dde3ea" stroke-width="0.6"/><path d="M4.5 5.3 L6 6.8 L8.7 4.1" fill="none" stroke="#3c9e1c" stroke-width="1.6" stroke-linejoin="round"/></svg><span class="dt"><span class="s">19.03.2025</span></span></div>
<div class="cell l" style="left:91px;width:92px"><span class="s">Расход материалов 0...</span></div>
<div class="cell l" style="left:183px;width:91px"><span class="s"></span></div>
<div class="cell r" style="left:274px;width:91px"><span class="s">1 303 864,77</span></div>
<div class="cell r" style="left:365px;width:86px"><span class="s"></span></div>
<div class="cell r" style="left:451px;width:64px"><span class="s"></span></div>
<div class="cell r" style="left:515px;width:91px"><span class="s"></span></div>
<div class="cell r" style="left:606px;width:100px"><span class="s">498 384,64</span></div>
<div class="cell l" style="left:706px;width:83px"><span class="s"></span></div>
<div class="cell l" style="left:789px;width:92px"><span class="s">Конфетпром ООО</span></div>
</div>
<div class="row" style="top:463px">
<div class="cell cur" style="left:0px;width:91px"><svg class="ic" width="10" height="9" viewBox="0 0 10 9"><rect x="0.3" y="0.3" width="8.8" height="6.4" rx="1.2" fill="#f1f4f8" stroke="#c3cad3" stroke-width="0.6"/><path d="M1.5 6.3h2" stroke="#aab2bc" stroke-width="0.8"/><path d="M8.7 1v2.5" stroke="#9aa2ab" stroke-width="0.8"/><path d="M2.5 2.5h5M2.5 4h3" stroke="#dde3ea" stroke-width="0.6"/><path d="M4.5 5.3 L6 6.8 L8.7 4.1" fill="none" stroke="#3c9e1c" stroke-width="1.6" stroke-linejoin="round"/></svg><span class="dt"><span class="s">20.03.2025</span></span></div>
<div class="cell l" style="left:91px;width:92px"><span class="s">Расход материалов 0...</span></div>
<div class="cell l" style="left:183px;width:91px"><span class="s"></span></div>
<div class="cell r" style="left:274px;width:91px"><span class="s">3 483 286,75</span></div>
<div class="cell r" style="left:365px;width:86px"><span class="s"></span></div>
<div class="cell r" style="left:451px;width:64px"><span class="s"></span></div>
<div class="cell r" style="left:515px;width:91px"><span class="s"></span></div>
<div class="cell r" style="left:606px;width:100px"><span class="s">688 445,41</span></div>
<div class="cell l" style="left:706px;width:83px"><span class="s"></span></div>
<div class="cell l" style="left:789px;width:92px"><span class="s">Конфетпром ООО</span></div>
</div>
<!-- partial last row -->
<div class="a" style="left:7px;top:479px;width:881px;height:4px;background:#f8f8f8"></div>
<!-- scroll buttons -->
<div class="a" style="left:836px;top:484px;width:53px;height:12px;border:1px solid #cfcfcf;border-top:none;border-bottom-color:#c4c4c4;background:linear-gradient(#ffffff,#f3f3f3);box-shadow:0 1px 0 #e6e6e6;border-radius:0 0 1px 1px"></div>
<div class="a" style="left:849px;top:484px;width:1px;height:11px;background:#dcdcdc"></div>
<div class="a" style="left:862px;top:484px;width:1px;height:11px;background:#dcdcdc"></div>
<div class="a" style="left:875px;top:484px;width:1px;height:11px;background:#dcdcdc"></div>
<svg class="a" style="left:840px;top:487px" width="6" height="5" viewBox="0 0 6 5"><path d="M0.5 0.6H5.5" stroke="#b8b8b8" stroke-width="0.8"/><path d="M3 1.3L5.3 3.8H0.7Z" fill="#b0b0b0"/></svg>
<svg class="a" style="left:853px;top:488px" width="6" height="4" viewBox="0 0 6 4"><path d="M3 0.5L5.8 3.5H0.2Z" fill="#aaa"/></svg>
<svg class="a" style="left:866px;top:488px" width="6" height="4" viewBox="0 0 6 4"><path d="M0.2 0.5H5.8L3 3.5Z" fill="#222"/></svg>
<svg class="a" style="left:879px;top:487px" width="6" height="5" viewBox="0 0 6 5"><path d="M0.5 0.5H5.5L3 3Z" fill="#222"/><path d="M0.5 4.2H5.5" stroke="#222" stroke-width="1"/></svg>

<div class="txt" style="left:7px;top:501.5px;color:#129865;-webkit-text-stroke:0.3px #129865"><span class="s">Движения</span></div>
<div class="a" style="left:7px;top:509px;width:33px;height:1px;background:#4db48c"></div>
</body></html>
